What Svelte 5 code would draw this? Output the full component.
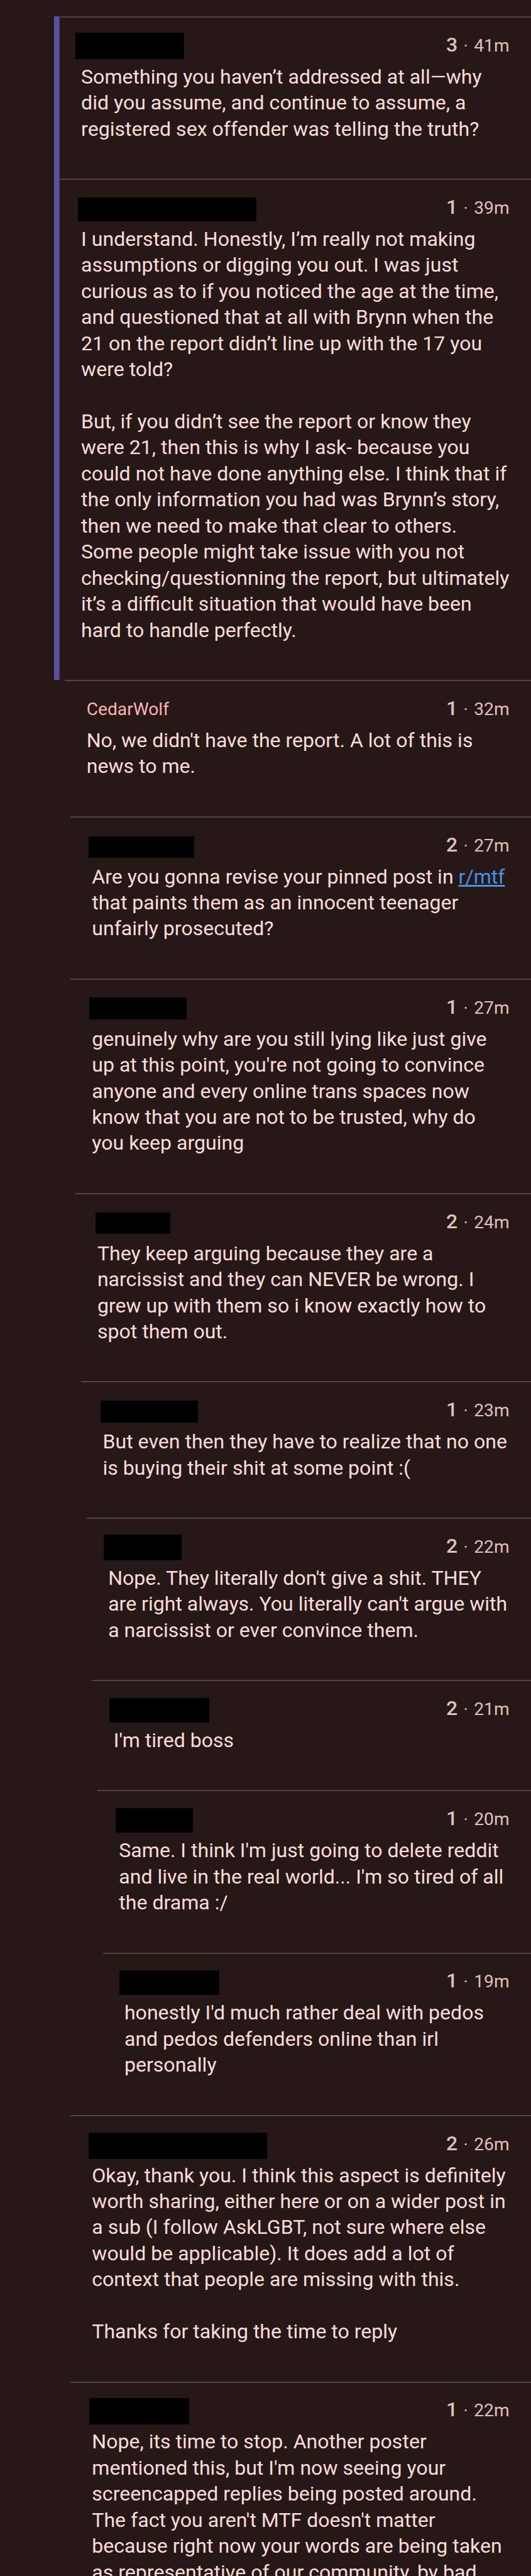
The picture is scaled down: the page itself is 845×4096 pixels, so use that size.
<script>
  const comments = [
    { x: 121, score: 3, age: '41m', thread: true, mask: { l: 154, w: 221, t: 33, h: 54 },
      lines: ['Something you haven’t addressed at all—why', 'did you assume, and continue to assume, a', 'registered sex offender was telling the truth?'] },
    { x: 121, score: 1, age: '39m', thread: true, mask: { l: 158, w: 363, t: 39, h: 48 },
      lines: ['I understand. Honestly, I’m really not making', 'assumptions or digging you out. I was just', 'curious as to if you noticed the age at the time,', 'and questioned that at all with Brynn when the', '21 on the report didn’t line up with the 17 you', 'were told?', '', 'But, if you didn’t see the report or know they', 'were 21, then this is why I ask- because you', 'could not have done anything else. I think that if', 'the only information you had was Brynn’s story,', 'then we need to make that clear to others.', 'Some people might take issue with you not', 'checking/questionning the report, but ultimately', 'it’s a difficult situation that would have been', 'hard to handle perfectly.'] },
    { x: 132, score: 1, age: '32m', author: 'CedarWolf',
      lines: ["No, we didn't have the report. A lot of this is", 'news to me.'] },
    { x: 143, score: 2, age: '27m', mask: { l: 180, w: 215, t: 42, h: 43 },
      lines: [['Are you gonna revise your pinned post in ', 'r/mtf'], 'that paints them as an innocent teenager', 'unfairly prosecuted?'] },
    { x: 143, score: 1, age: '27m', mask: { l: 182, w: 198, t: 39, h: 45 },
      lines: ['genuinely why are you still lying like just give', "up at this point, you're not going to convince", 'anyone and every online trans spaces now', 'know that you are not to be trusted, why do', 'you keep arguing'] },
    { x: 154, score: 2, age: '24m', mask: { l: 194, w: 153, t: 40, h: 44 },
      lines: ['They keep arguing because they are a', 'narcissist and they can NEVER be wrong. I', 'grew up with them so i know exactly how to', 'spot them out.'] },
    { x: 165, score: 1, age: '23m', mask: { l: 204, w: 198, t: 39, h: 45 },
      lines: ['But even then they have to realize that no one', 'is buying their shit at some point :('] },
    { x: 176, score: 2, age: '22m', mask: { l: 211, w: 159, t: 34, h: 53 },
      lines: ["Nope. They literally don't give a shit. THEY", "are right always. You literally can't argue with", 'a narcissist or ever convince them.'] },
    { x: 187, score: 2, age: '21m', mask: { l: 222, w: 204, t: 37, h: 50 },
      lines: ["I'm tired boss"] },
    { x: 198, score: 1, age: '20m', mask: { l: 235, w: 158, t: 37, h: 50 },
      lines: ["Same. I think I'm just going to delete reddit", "and live in the real world... I'm so tired of all", 'the drama :/'] },
    { x: 209, score: 1, age: '19m', mask: { l: 243, w: 203, t: 36, h: 50 },
      lines: ["honestly I'd much rather deal with pedos", 'and pedos defenders online than irl', 'personally'] },
    { x: 143, score: 2, age: '26m', mask: { l: 180, w: 363, t: 36, h: 54 },
      lines: ['Okay, thank you. I think this aspect is definitely', 'worth sharing, either here or on a wider post in', 'a sub (I follow AskLGBT, not sure where else', 'would be applicable). It does add a lot of', 'context that people are missing with this.', '', 'Thanks for taking the time to reply'] },
    { x: 143, score: 1, age: '22m', mask: { l: 181, w: 204, t: 34, h: 54 },
      lines: ['Nope, its time to stop. Another poster', "mentioned this, but I'm now seeing your", 'screencapped replies being posted around.', "The fact you aren't MTF doesn't matter", 'because right now your words are being taken', 'as representative of our community, by bad'] },
  ];
  const u = (n) => `calc(${n} * var(--u))`;
</script>

<main>
  {#each comments as c}
    <div class="row" class:thread={c.thread} style:--x={u(c.x)}>
      <article>
        <header>
          {#if c.mask}
            <span class="mask" style:margin-left={u(c.mask.l - c.x - 44)} style:margin-top={u(c.mask.t - 3)} style:width={u(c.mask.w)} style:height={u(c.mask.h)}></span>
          {:else}
            <span class="author">{c.author}</span>
          {/if}
          <span class="meta"><b>{c.score}</b><span class="dot">·</span>{c.age}</span>
        </header>
        <div class="body">
          {#each c.lines as line}
            <div class="line">{#if Array.isArray(line)}{line[0]}<a href="#mtf">{line[1]}</a>{:else}{line}{/if}</div>
          {/each}
        </div>
      </article>
    </div>
  {/each}
</main>

<style>
  :global(body) { background: #271818; }
  main {
    --u: 0.78241px;
    box-sizing: border-box;
    width: 845px;
    height: 4096px;
    overflow: hidden;
    padding-top: calc(33 * var(--u));
    background: #271818;
    color: #fbdcdb;
    font-family: Roboto, sans-serif;
  }
  .row { box-sizing: border-box; padding-left: var(--x); }
  .row.thread {
    margin-left: calc(110 * var(--u));
    padding-left: calc(11 * var(--u));
    background: linear-gradient(#5e50a1, #5e50a1) 0 0 / calc(11 * var(--u)) 100% no-repeat;
  }
  article {
    box-sizing: border-box;
    border-top: 2px solid #5b4142;
    padding: calc(3 * var(--u) - 2px) calc(44 * var(--u)) calc(74 * var(--u));
  }
  header {
    display: flex;
    justify-content: space-between;
    align-items: flex-start;
    height: calc(94 * var(--u));
  }
  .mask { flex: none; background: #000; }
  .author {
    color: #ffb3b1;
    font-size: calc(36 * var(--u));
    line-height: calc(50 * var(--u));
    margin-top: calc(32 * var(--u));
  }
  .meta {
    color: #e0bfbe;
    font-size: calc(36 * var(--u));
    line-height: calc(50 * var(--u));
    margin-top: calc(30.1 * var(--u));
    white-space: pre;
  }
  .meta b { font-size: calc(41 * var(--u)); font-weight: 500; }
  .dot { margin: 0 calc(12 * var(--u)); }
  .body { font-size: calc(41 * var(--u)); line-height: calc(53 * var(--u)); white-space: pre; }
  .line { height: calc(53 * var(--u)); }
  a { color: #4a90e2; text-decoration: underline; }
</style>
